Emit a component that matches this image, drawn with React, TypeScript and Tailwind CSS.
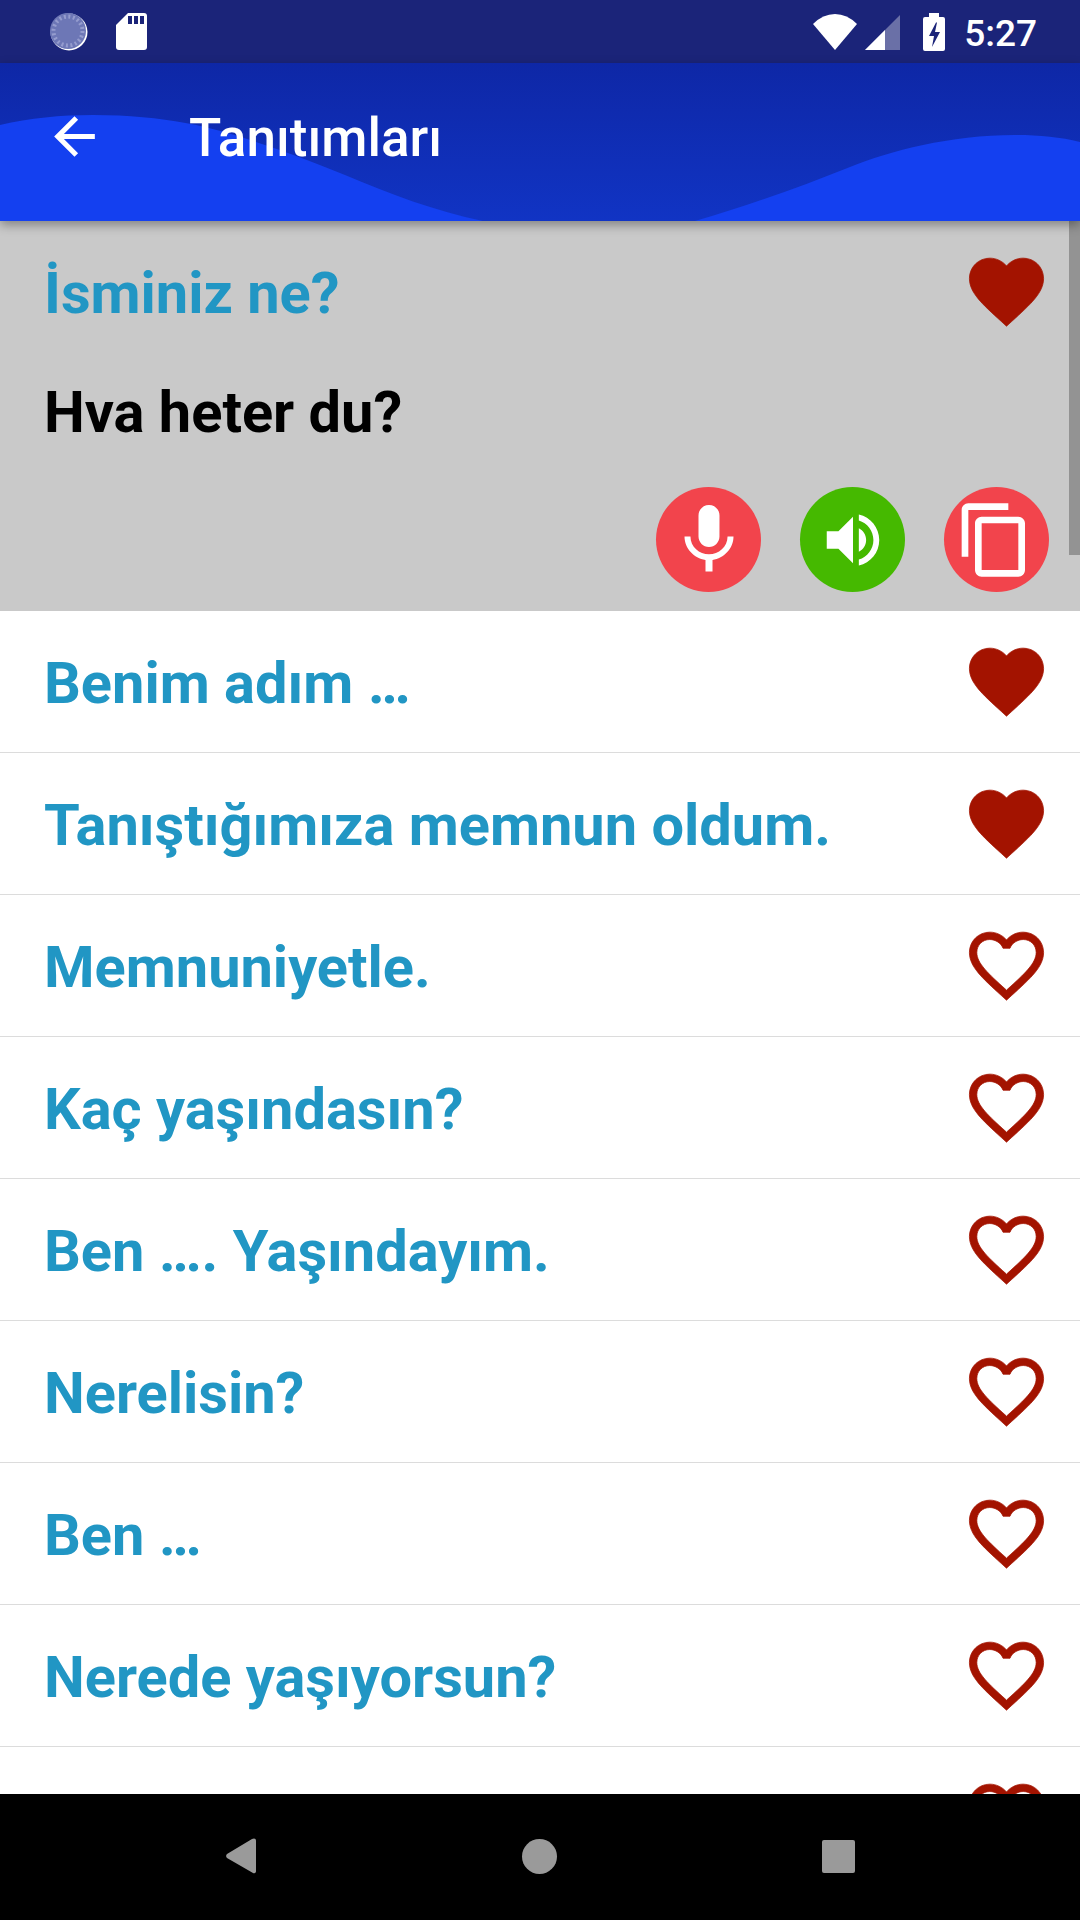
const phrases = [
  { text: "Benim adım …", liked: true },
  { text: "Tanıştığımıza memnun oldum.", liked: true },
  { text: "Memnuniyetle.", liked: false },
  { text: "Kaç yaşındasın?", liked: false },
  { text: "Ben …. Yaşındayım.", liked: false },
  { text: "Nerelisin?", liked: false },
  { text: "Ben …", liked: false },
  { text: "Nerede yaşıyorsun?", liked: false },
  { text: "", liked: false },
];

const Heart = ({ filled }: { filled: boolean }) => (
  <svg viewBox="0 0 24 24" className="w-[89px] h-[89px] shrink-0 fill-[#a31300] stroke-[#a31300] stroke-[0.2]">
    {filled ? (
      <path d="M12 21.35l-1.45-1.32C5.4 15.36 2 12.28 2 8.5 2 5.42 4.42 3 7.5 3c1.74 0 3.41.81 4.5 2.09C13.09 3.81 14.76 3 16.5 3 19.58 3 22 5.42 22 8.5c0 3.78-3.4 6.86-8.55 11.54L12 21.35z" />
    ) : (
      <path d="M16.5 3c-1.74 0-3.41.81-4.5 2.09C10.91 3.81 9.24 3 7.5 3 4.42 3 2 5.42 2 8.5c0 3.78 3.4 6.86 8.55 11.54L12 21.35l1.45-1.32C18.6 15.36 22 12.28 22 8.5 22 5.42 19.58 3 16.5 3zm-4.4 15.55l-.1.1-.1-.1C7.14 14.24 4 11.39 4 8.5 4 6.5 5.5 5 7.5 5c1.54 0 3.04.99 3.57 2.36h1.87C13.46 5.99 14.96 5 16.5 5c2 0 3.5 1.5 3.5 3.5 0 2.89-3.14 5.74-7.9 10.05z" />
    )}
  </svg>
);

const StatusBar = () => (
  <div className="h-[63px] shrink-0 bg-[#1b2479] flex items-center pl-[50px] pr-[43px]">
    {/* spinner */}
    <svg viewBox="0 0 38 38" className="w-[38px] h-[38px]">
      <circle cx="19" cy="19" r="18.500" fill="#ffffff" />
      <circle cx="18" cy="18" r="18" fill="#6d77b6" />
      <circle cx="18" cy="18" r="14.500" fill="none" stroke="#959cce" strokeWidth="4" strokeDasharray="2 2.550" />
    </svg>
    {/* sd card */}
    <svg viewBox="0 0 31 37" className="w-[31px] h-[37px] ml-[28px]">
      <path d="M12 0h16a3 3 0 0 1 3 3v31a3 3 0 0 1-3 3H3a3 3 0 0 1-3-3V12z" fill="#ffffff" />
      <path d="M12 3h4v8h-4zM18 3h4v8h-4zM24 3h4v8h-4z" fill="#1b2479" />
    </svg>
    <div className="ml-auto flex items-center">
      <svg viewBox="0 0 44 36" className="w-[44px] h-[36px]">
        <path d="M22 36 L0 10 Q10 0 22 0 Q34 0 44 10z" fill="#ffffff" />
      </svg>
      <svg viewBox="0 0 35 35" className="w-[35px] h-[35px] ml-[8px] mt-[2px]">
        <path d="M35 0v35H0z" fill="#ffffff" fillOpacity="0.35" />
        <path d="M20 15v20H0z" fill="#ffffff" />
      </svg>
      <svg viewBox="0 0 22 38" className="w-[22px] h-[38px] ml-[23px]">
        <path d="M6 0h10v4h4a2 2 0 0 1 2 2v30a2 2 0 0 1-2 2H2a2 2 0 0 1-2-2V6a2 2 0 0 1 2-2h4z" fill="#ffffff" />
        <path d="M13 9.500 6 23h5l-2 11 8-15h-5l2-9.500z" fill="#1b2479" />
      </svg>
      <span className="ml-[19px] mt-[3px] text-[37px] leading-none font-medium text-white font-['Roboto',sans-serif]">5:27</span>
    </div>
  </div>
);

const Header = () => (
  <div className="relative z-10 h-[158px] shrink-0 bg-gradient-to-b from-[#0e27a6] to-[#1134c4] shadow-[0_4px_10px_rgba(0,0,0,0.35)] flex items-center pl-[44px] overflow-visible">
    {/* wave */}
    <svg viewBox="0 0 1080 158" className="absolute inset-0 w-full h-full" preserveAspectRatio="none">
      <path
        d="M0 62 C30 55 60 52 93 52 C170 52 220 66 265 82 C295 92 320 102 345 112 C390 131 435 148 483 158 L695 158 C750 142 800 124 850 104 C890 88 950 72 1015 72 C1040 72 1060 74 1080 79 L1080 158 L0 158z"
        fill="#1440f0"
      />
    </svg>
    <svg viewBox="0 0 24 24" className="relative w-[61px] h-[61px] -mt-[11px] fill-white">
      <path d="M20 11H7.830l5.590-5.590L12 4l-8 8 8 8 1.410-1.410L7.830 13H20v-2z" />
    </svg>
    <span className="relative ml-[84px] -mt-[8px] text-[53px] leading-none font-medium text-white font-['Roboto',sans-serif]">Tanıtımları</span>
  </div>
);

const SelectedPhrase = () => (
  <div className="h-[390px] shrink-0 bg-[#c9c9c9] flex flex-col pb-[19px]">
    <div className="h-[140px] shrink-0 flex items-center justify-between pl-[44px] pr-[29px]">
      <span className="mt-[5px] text-[57.75px] font-bold text-[#2196c4]">İsminiz ne?</span>
      <Heart filled />
    </div>
    <div className="pl-[44px] text-[57.75px] leading-[102px] font-bold text-black">Hva heter du?</div>
    <div className="mt-auto flex justify-end gap-[39px] pr-[31px]">
      <div className="w-[105px] h-[105px] rounded-full bg-[#f2444c] flex items-center justify-center">
        <svg viewBox="0 0 24 24" className="w-[84px] h-[84px] fill-white">
          <path d="M12 14c1.660 0 2.990-1.340 2.990-3L15 5c0-1.660-1.340-3-3-3S9 3.340 9 5v6c0 1.660 1.340 3 3 3zm5.300-3c0 3-2.540 5.100-5.300 5.100S6.700 14 6.700 11H5c0 3.410 2.720 6.230 6 6.720V21h2v-3.280c3.280-.48 6-3.300 6-6.720h-1.700z" />
        </svg>
      </div>
      <div className="w-[105px] h-[105px] rounded-full bg-[#45b900] flex items-center justify-center">
        <svg viewBox="0 0 24 24" className="w-[70px] h-[70px] fill-white">
          <path d="M3 9v6h4l5 5V4L7 9H3zm13.500 3c0-1.770-1.020-3.290-2.500-4.030v8.050c1.480-.73 2.500-2.250 2.500-4.020zM14 3.230v2.060c2.890.86 5 3.540 5 6.710s-2.110 5.850-5 6.710v2.060c4.010-.91 7-4.490 7-8.770s-2.990-7.860-7-8.770z" />
        </svg>
      </div>
      <div className="w-[105px] h-[105px] rounded-full bg-[#f2444c] flex items-center justify-center">
        <svg viewBox="0 0 24 24" className="w-[80px] h-[80px] -ml-[3px] fill-white">
          <path d="M16 1H4c-1.100 0-2 .9-2 2v14h2V3h12V1zm3 4H8c-1.100 0-2 .9-2 2v14c0 1.100.9 2 2 2h11c1.100 0 2-.9 2-2V7c0-1.100-.9-2-2-2zm0 16H8V7h11v14z" />
        </svg>
      </div>
    </div>
  </div>
);

const NavBar = () => (
  <div className="h-[126px] shrink-0 bg-black flex items-center relative z-10">
    <svg viewBox="0 0 30 36" className="w-[30px] h-[36px] ml-[226px] -mt-[2px]">
      <path d="M28 0.500a2 2 0 0 1 2 2v31a2 2 0 0 1-3 1.500L1 20a3 3 0 0 1 0-4L26 1z" fill="#9a9a9a" />
    </svg>
    <div className="w-[35px] h-[35px] rounded-full bg-[#9a9a9a] ml-[266px] -mt-[2px]" />
    <div className="w-[33px] h-[33px] rounded-[2px] bg-[#9a9a9a] ml-[265px] -mt-[2px]" />
  </div>
);

export default function App() {
  return (
    <div className="relative w-[1080px] h-[1920px] flex flex-col overflow-hidden bg-white font-['Roboto',sans-serif]">
      <StatusBar />
      <Header />
      <div className="relative flex-1 overflow-hidden">
        <SelectedPhrase />
        {phrases.map((p, i) => (
          <div key={i} className="h-[142px] flex items-center justify-between pl-[44px] pr-[29px] border-b border-[#dcdcdc]">
            <span className="mt-[3px] text-[57.75px] font-bold text-[#2196c4]">{p.text}</span>
            <Heart filled={p.liked} />
          </div>
        ))}
        {/* scrollbar */}
        <div className="absolute top-0 right-0 w-[11px] h-[334px] bg-[#939393]" />
      </div>
      <NavBar />
    </div>
  );
}
